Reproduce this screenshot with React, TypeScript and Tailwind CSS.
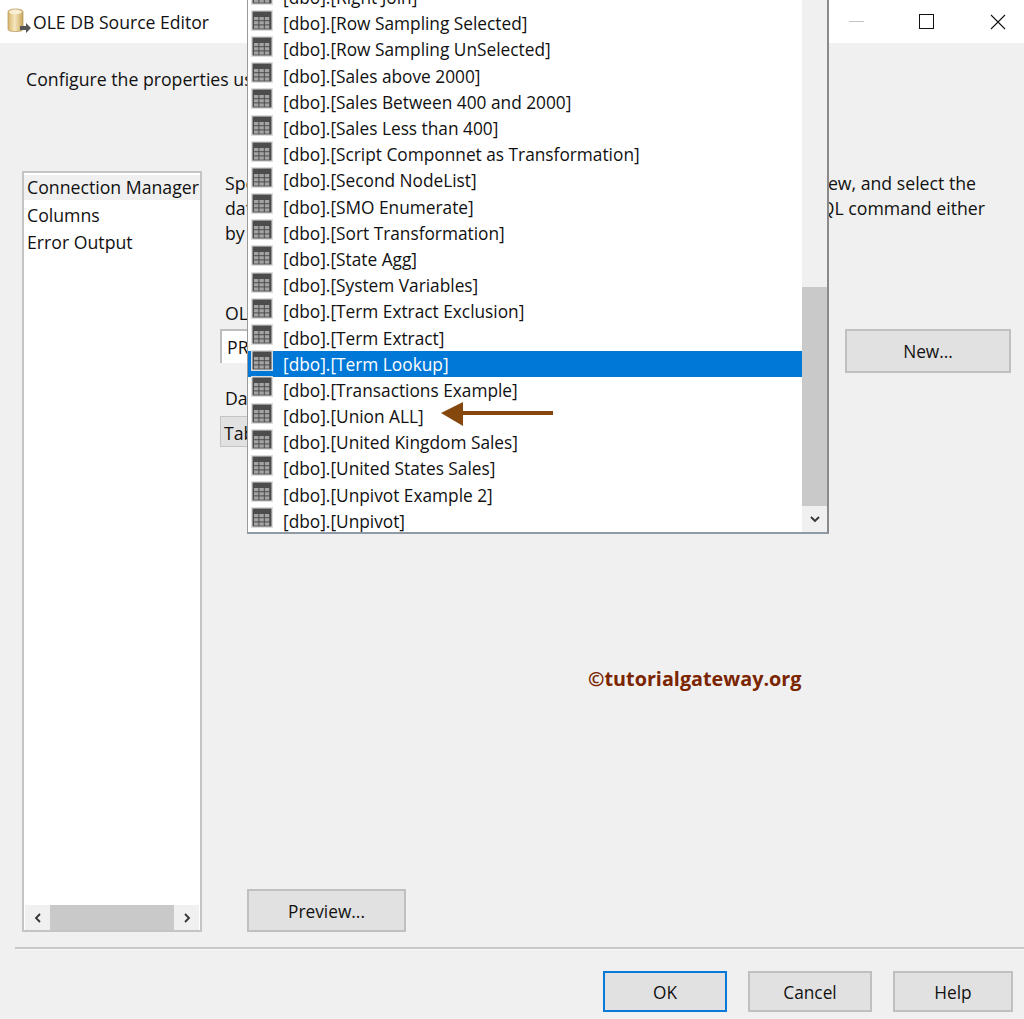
import React from "react";

const font = { fontFamily: '"Open Sans", "Noto Sans", sans-serif' };

const tables = [
  "[dbo].[Right Join]",
  "[dbo].[Row Sampling Selected]",
  "[dbo].[Row Sampling UnSelected]",
  "[dbo].[Sales above 2000]",
  "[dbo].[Sales Between 400 and 2000]",
  "[dbo].[Sales Less than 400]",
  "[dbo].[Script Componnet as Transformation]",
  "[dbo].[Second NodeList]",
  "[dbo].[SMO Enumerate]",
  "[dbo].[Sort Transformation]",
  "[dbo].[State Agg]",
  "[dbo].[System Variables]",
  "[dbo].[Term Extract Exclusion]",
  "[dbo].[Term Extract]",
  "[dbo].[Term Lookup]",
  "[dbo].[Transactions Example]",
  "[dbo].[Union ALL]",
  "[dbo].[United Kingdom Sales]",
  "[dbo].[United States Sales]",
  "[dbo].[Unpivot Example 2]",
  "[dbo].[Unpivot]",
];

function TableIcon() {
  const cells = [];
  for (let r = 0; r < 3; r++) {
    for (let c = 0; c < 3; c++) {
      cells.push(<rect key={`${r}-${c}`} x={3 + c * 5.4} y={7 + r * 4.2} width={4.4} height={3.2} fill="#a4a4a4" />);
    }
  }
  return (
    <svg width="22" height="21" viewBox="0 0 22 21" className="shrink-0 block">
      <rect x="0" y="0" width="22" height="21" fill="#dcdcdc" />
      <rect x="1.500" y="1.500" width="19" height="18" fill="#4c4c4c" />
      {cells}
    </svg>
  );
}

function Btn({ label, className }: { label: string; className: string }) {
  return (
    <button className={`bg-[#e1e1e1] border-2 border-[#c0c0c0] text-[#111] text-[17.3px] pt-[2px] ${className}`}>{label}</button>
  );
}

export default function App() {
  return (
    <div style={font} className="relative w-[1024px] h-[1019px] overflow-hidden bg-[#f0f0f0] text-[#111] text-[17.7px] leading-[26px]">
      {/* title bar */}
      <div className="h-[43px] bg-white flex items-center">
        <svg width="24" height="26" viewBox="0 0 24 26" className="ml-[7px] -mt-[2px]">
          <defs>
            <linearGradient id="cyl" x1="0" x2="1" y1="0" y2="0">
              <stop offset="0" stopColor="#d9b569" />
              <stop offset="0.45" stopColor="#f6e7bf" />
              <stop offset="1" stopColor="#c9a558" />
            </linearGradient>
          </defs>
          <path d="M1 4c0-2 3-3 7.500-3S16 2 16 4v17c0 2-3 2.500-7.500 2.500S1 23 1 21z" fill="url(#cyl)" stroke="#b0935a" strokeWidth="0.7" />
          <ellipse cx="8.500" cy="4" rx="6.500" ry="2.200" fill="#f8efd6" />
          <path d="M13 18h6v-3l5 5-5 5v-3h-6z" fill="#555" />
        </svg>
        <span className="ml-[2px] text-[17.6px]">OLE DB Source Editor</span>
        <div className="ml-auto flex items-center">
          <div className="w-[15px] h-px bg-[#c4c4c4] mr-[55px]" />
          <div className="w-[15px] h-[15px] border border-[#111] mr-[56px]" />
          <svg width="16" height="16" viewBox="0 0 16 16" className="mr-[18px]">
            <path d="M1 1l14 14M15 1L1 15" stroke="#111" strokeWidth="1.100" />
          </svg>
        </div>
      </div>

      {/* description */}
      <div className="pl-[26px] pt-[23px] h-[128px] whitespace-nowrap">Configure the properties used to connect to a data source.</div>

      {/* main area */}
      <div className="flex h-[761px]">
        <div className="ml-[22px] w-[180px] h-full border-2 border-[#c4c4c4] bg-white flex flex-col">
          <div className="pt-[2px] flex-1">
            <div className="h-[25px] bg-[#f0f0f0] pl-[3px] whitespace-nowrap overflow-hidden leading-[25px]">Connection Manager</div>
            <div className="h-[28px] pl-[3px] leading-[30px]">Columns</div>
            <div className="h-[28px] pl-[3px] leading-[29px]">Error Output</div>
          </div>
          <div className="h-[25px] mx-[1px] bg-[#f0f0f0] flex items-stretch">
            <div className="w-[25px] flex items-center justify-center">
              <svg width="8" height="10" viewBox="0 0 8 10"><path d="M6 1L2 5l4 4" fill="none" stroke="#333" strokeWidth="1.800" /></svg>
            </div>
            <div className="w-[124px] bg-[#c9c9c9]" />
            <div className="flex-1 flex items-center justify-center">
              <svg width="8" height="10" viewBox="0 0 8 10"><path d="M2 1l4 4-4 4" fill="none" stroke="#333" strokeWidth="1.800" /></svg>
            </div>
          </div>
        </div>

        <div className="flex-1 flex flex-col ml-[18px] mr-[13px]">
          <div className="pl-[5px] pr-[26px] leading-[25px] whitespace-nowrap">
            <div className="flex justify-between pr-[9px]"><span>Specify an OLE DB connection</span><span>ew, and select the</span></div>
            <div className="flex justify-between"><span>data access mode.</span><span>QL command either</span></div>
            <div>by typing the query</div>
          </div>
          <div className="pl-[5px] mt-[54px] h-[26px] whitespace-nowrap">OLE DB connection manager:</div>
          <div className="flex justify-between items-start mt-[3px]">
            <div className="w-[560px] h-[34px] bg-white border-l-2 border-t-2 border-[#bdbdbd] pl-[5px] leading-[32px]">PR</div>
            <Btn label="New..." className="w-[166px] h-[44px]" />
          </div>
          <div className="pl-[5px] h-[26px] whitespace-nowrap leading-[50px]">Data access mode:</div>
          <div className="mt-[17px] w-[560px] h-[31px] bg-[#e1e1e1] border border-[#c4c4c4] pl-[3px] leading-[33px] whitespace-nowrap">Table or view</div>
          <div className="mt-auto ml-[27px]">
            <Btn label="Preview..." className="w-[159px] h-[43px] block" />
          </div>
        </div>
      </div>

      {/* separator */}
      <div className="ml-[15px] mt-[15px] h-[3px] border-t-2 border-[#c8c8c8] border-b border-b-[#fafafa] border-l border-l-[#d0d0d0]" />

      {/* footer buttons */}
      <div className="flex justify-end mt-[21px] mr-[11px] gap-[21px]">
        <button className="w-[124px] h-[41px] bg-[#e1e1e1] border-2 border-[#0a78d7] text-[17.3px] pt-[2px]">OK</button>
        <Btn label="Cancel" className="w-[124px] h-[41px]" />
        <Btn label="Help" className="w-[120px] h-[41px]" />
      </div>

      {/* watermark */}
      <div className="absolute left-[588px] top-[664px] text-[19.8px] leading-[30px] font-bold text-[#7a2400] whitespace-nowrap">©tutorialgateway.org</div>

      {/* open dropdown list */}
      <div className="absolute left-[247px] top-0 w-[582px] h-[534px] bg-white border-l border-l-[#9a9a9a] border-r-2 border-r-[#8a8a8a] border-b-2 border-b-[#8f9aa5] flex overflow-hidden text-[17.3px]">
        <div className="flex-1 min-w-0 -mt-[16px]">
          {tables.map((t) => {
            const selected = t === "[dbo].[Term Lookup]";
            return (
              <div key={t} className={`h-[26.2px] flex items-center pl-[3px] whitespace-nowrap ${selected ? "bg-[#0078d7] text-white" : ""}`}>
                <span className="-mt-[6px]"><TableIcon /></span>
                <span className="ml-[10px] mt-[2px]">{t}</span>
              </div>
            );
          })}
        </div>
        <div className="w-[25px] shrink-0 flex flex-col bg-[#f0f0f0]">
          <div className="h-[287px] shrink-0" />
          <div className="h-[219px] shrink-0 bg-[#c9c9c9]" />
          <div className="flex-1 flex items-center justify-center">
            <svg width="10" height="8" viewBox="0 0 10 8"><path d="M1 2l4 4 4-4" fill="none" stroke="#333" strokeWidth="1.800" /></svg>
          </div>
        </div>
      </div>

      {/* annotation arrow */}
      <svg width="114" height="26" viewBox="0 0 114 26" className="absolute left-[440px] top-[401px]">
        <path d="M1 12L23 1v9h90v4H23v11z" fill="#84480f" />
      </svg>
    </div>
  );
}
